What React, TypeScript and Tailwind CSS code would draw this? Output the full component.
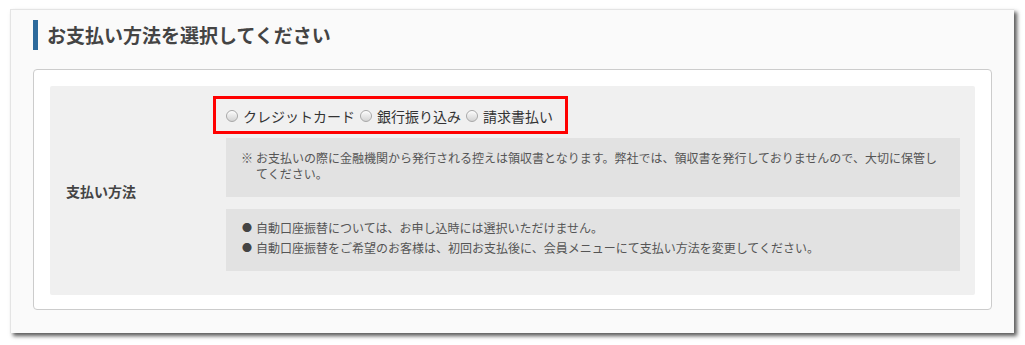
import React from 'react';

const methods = ['クレジットカード', '銀行振り込み', '請求書払い'];

function Radio() {
  return (
    <span className="inline-block w-[12px] h-[12px] rounded-full border border-[#a8a8a8] bg-gradient-to-b from-[#fbfbfb] to-[#d4d4d4] shadow-[inset_0_1px_1px_rgba(255,255,255,0.8)]" />
  );
}

export default function App() {
  return (
    <div
      className="w-[1025px] h-[345px] bg-white pt-[9px] pl-[10px]"
      style={{ fontFamily: '"Noto Sans CJK JP", "Noto Sans", sans-serif' }}
    >
      <div className="w-[1004px] h-[324px] bg-[#fafafa] border-t border-l border-[#e4e4e4] shadow-[3px_3px_4px_rgba(0,0,0,0.65)] pt-[10px] pl-[22px] pr-[22px]">
        {/* heading */}
        <div className="flex items-center h-[30px]">
          <div className="w-[5px] h-[30px] bg-[#2d6a9c]" />
          <h1 className="ml-[9px] text-[19px] leading-[30px] font-bold text-[#444]">
            お支払い方法を選択してください
          </h1>
        </div>

        {/* form box */}
        <div className="mt-[19px] bg-white border border-[#cccccc] rounded-[4px] p-[16px] pb-[14px]">
          <div className="flex bg-[#f0f0f0] rounded-[2px] h-[209px]">
            <div className="w-[176px] shrink-0 pl-[16px] flex items-center">
              <span className="text-[14px] font-bold text-[#444] pt-[2px]">支払い方法</span>
            </div>
            <div className="w-[734px] pt-[16px]">
              <div className="relative flex items-center h-[28px] text-[14px] text-[#333]">
                <div className="absolute left-[-13px] top-[-6px] w-[355px] h-[38px] border-[3px] border-[#ff0000] pointer-events-none" />
                {methods.map((m, i) => (
                  <label key={m} className={'flex items-center ' + (i > 0 ? 'ml-[5px]' : '')}>
                    <Radio />
                    <span className="ml-[5px]">{m}</span>
                  </label>
                ))}
              </div>

              <div className="mt-[8px] bg-[#e2e2e2] pl-[15px] pr-[15px] pt-[12px] pb-[15px] text-[12px] leading-[16px] text-[#555] flex">
                <span className="w-[15px] shrink-0">※</span>
                <p className="flex-1">
                  お支払いの際に金融機関から発行される控えは領収書となります。弊社では、領収書を発行しておりませんので、大切に保管してください。
                </p>
              </div>

              <div className="mt-[12px] bg-[#e2e2e2] pl-[16px] pr-[15px] pt-[9px] pb-[13px] text-[12px] leading-[20px] text-[#555]">
                <div className="flex items-center">
                  <span className="w-[14px] shrink-0 text-[10px] text-[#444]">●</span>
                  <span>自動口座振替については、お申し込時には選択いただけません。</span>
                </div>
                <div className="flex items-center">
                  <span className="w-[14px] shrink-0 text-[10px] text-[#444]">●</span>
                  <span>自動口座振替をご希望のお客様は、初回お支払後に、会員メニューにて支払い方法を変更してください。</span>
                </div>
              </div>
            </div>
          </div>
        </div>
      </div>
    </div>
  );
}
